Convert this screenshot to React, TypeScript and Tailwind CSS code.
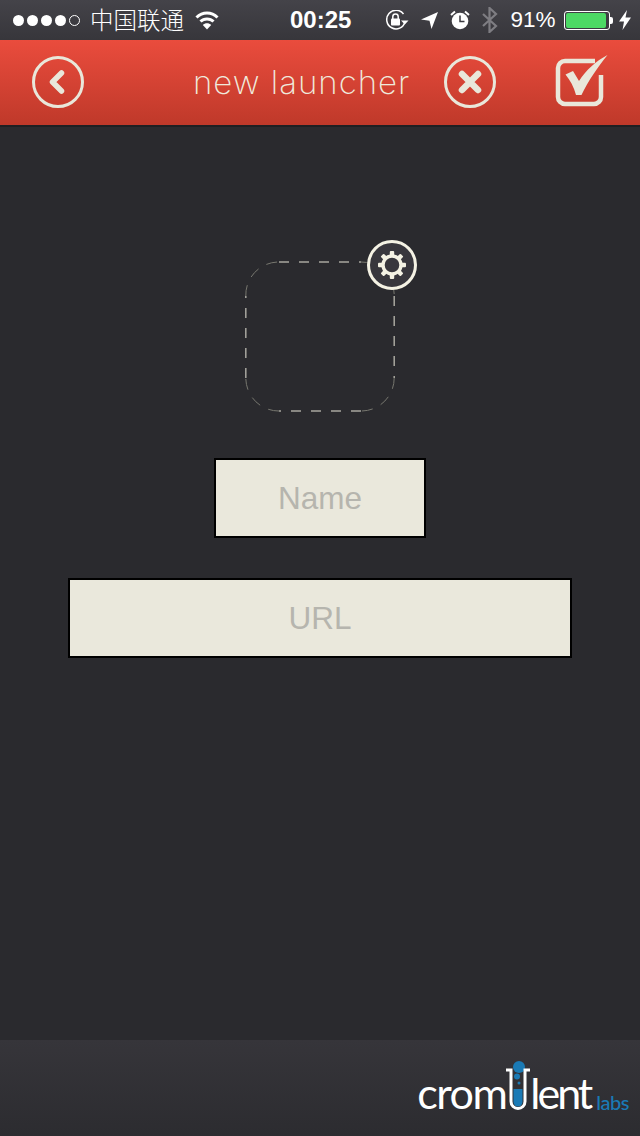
const cream = "#e9e7da";

function Dots() {
  return (
    <div className="flex gap-[3px]">
      <div className="w-[11px] h-[11px] rounded-full bg-white" />
      <div className="w-[11px] h-[11px] rounded-full bg-white" />
      <div className="w-[11px] h-[11px] rounded-full bg-white" />
      <div className="w-[11px] h-[11px] rounded-full bg-white" />
      <div className="w-[11px] h-[11px] rounded-full border border-white" />
    </div>
  );
}

function Wifi() {
  return (
    <svg width="24" height="20" viewBox="0 0 24 20" fill="none" stroke="#fff" strokeWidth="3">
      <path d="M1.5 7.5C7.5 1.5 16.5 1.5 22.5 7.5" />
      <path d="M5.5 11.5C9 8 15 8 18.5 11.5" />
      <path d="M12 19.5L7.8 15C10 12.8 14 12.8 16.2 15Z" fill="#fff" stroke="none" />
    </svg>
  );
}

function RotationLock() {
  return (
    <svg width="24" height="20" viewBox="0 0 24 20" fill="none">
      <path d="M20 12A9.3 9.3 0 1 1 18.5 4" stroke="#fff" strokeWidth="1.5" />
      <path d="M16 10.5H23.5L19.8 14.5Z" fill="#fff" />
      <rect x="6" y="8.5" width="9" height="7" rx="1" fill="#fff" />
      <path d="M7.8 9V6.8a2.7 2.7 0 0 1 5.4 0V9" stroke="#fff" strokeWidth="1.5" />
    </svg>
  );
}

function Location() {
  return (
    <svg width="17" height="17" viewBox="0 0 17 17">
      <path d="M17 0L10.5 17L8.5 8.7L0 7.5Z" fill="#fff" />
    </svg>
  );
}

function Alarm() {
  return (
    <svg width="20" height="20" viewBox="0 0 20 20" fill="none">
      <circle cx="10" cy="11" r="8.3" fill="#fff" />
      <path d="M10 5.5V11.5H14.5" stroke="#3a393f" strokeWidth="1.5" />
      <path d="M1 5L5 1.5M19 5L15 1.5" stroke="#fff" strokeWidth="2" />
    </svg>
  );
}

function Bluetooth() {
  return (
    <svg width="16" height="26" viewBox="0 0 16 26" fill="none" stroke="#7e7d82" strokeWidth="2.2">
      <path d="M1 7L14 19L7.5 25V1L14 7L1 19" />
    </svg>
  );
}

function Battery() {
  return (
    <div className="flex items-center">
      <div className="w-[46px] h-[19px] rounded-[3px] border border-white p-[1px]">
        <div className="w-[40px] h-full rounded-[2px] bg-[#4cd964]" />
      </div>
      <div className="w-[3px] h-[7px] rounded-r-[2px] bg-white" />
    </div>
  );
}

function Bolt() {
  return (
    <svg width="12" height="20" viewBox="0 0 12 20">
      <path d="M8 0L0 11.5H5L3.5 20L12 7.5H6.5Z" fill="#fff" />
    </svg>
  );
}

function BackIcon() {
  return (
    <svg width="52" height="52" viewBox="0 0 52 52" fill="none" stroke={cream}>
      <circle cx="26" cy="26" r="24.5" strokeWidth="3" />
      <path d="M29.5 17L20.5 26L29.5 35" strokeWidth="5.5" strokeLinecap="round" strokeLinejoin="round" />
    </svg>
  );
}

function CloseIcon() {
  return (
    <svg width="52" height="52" viewBox="0 0 52 52" fill="none" stroke={cream}>
      <circle cx="26" cy="26" r="24.5" strokeWidth="3" />
      <path d="M18 18L34 34M34 18L18 34" strokeWidth="6.5" strokeLinecap="round" />
    </svg>
  );
}

function CheckIcon() {
  return (
    <svg width="53" height="52" viewBox="0 0 53 52" fill="none">
      <path d="M40 6H10a7 7 0 0 0-7 7V42a7 7 0 0 0 7 7H39a7 7 0 0 0 7-7V20" stroke={cream} strokeWidth="4.5" />
      <path d="M10.5 19.5L18 16L24 26C31 15 41 6 52.5 0C43 12 33 26 26.5 40H21C19 32 15 25 10.5 19.5Z" fill={cream} />
    </svg>
  );
}

function Gear() {
  const teeth = [0, 45, 90, 135, 180, 225, 270, 315];
  return (
    <svg width="50" height="50" viewBox="0 0 50 50" fill="none">
      <circle cx="25" cy="25" r="23.5" fill="#38373d" stroke="#f4f2e4" strokeWidth="3" />
      <circle cx="25" cy="25" r="9" stroke="#f4f2e4" strokeWidth="3.4" />
      {teeth.map((a) => (
        <rect key={a} x="22.8" y="11" width="4.4" height="6" rx="1" fill="#f4f2e4" transform={`rotate(${a} 25 25)`} />
      ))}
    </svg>
  );
}

function DashedBox() {
  return (
    <svg width="150" height="151" viewBox="0 0 150 151" fill="none">
      <path
        d="M34 1H116M149.2 35V117M116 150H34M0.8 117V35"
        stroke="#a8a79f"
        strokeWidth="1.5"
        strokeDasharray="10 10"
      />
      <path
        d="M116 1A33 33 0 0 1 149.2 35M149.2 117A33 33 0 0 1 116 150M34 150A33 33 0 0 1 0.8 117M0.8 35A33 33 0 0 1 34 1"
        stroke="#77776f"
        strokeWidth="1"
        strokeDasharray="11 9"
      />
    </svg>
  );
}

function Tube() {
  return (
    <svg width="24" height="52" viewBox="0 0 24 52" fill="none">
      <circle cx="13" cy="6" r="6" fill="#1a7ab5" />
      <circle cx="11" cy="15.5" r="3" fill="#1a7ab5" />
      <circle cx="13" cy="22" r="1.5" fill="#1a7ab5" />
      <path d="M7.5 28H16.5V41a4.5 4.5 0 0 1-9 0Z" fill="#1a7ab5" />
      <path d="M0 9H5V40.5a7 7 0 0 0 14 0V9H24" stroke="#fff" strokeWidth="3" />
    </svg>
  );
}

export default function App() {
  return (
    <div className="w-[640px] h-[1136px] flex flex-col bg-[#2a2a2e] font-['Liberation_Sans',sans-serif] overflow-hidden">
      <div className="h-[40px] flex items-center pl-[13px] text-white bg-gradient-to-b from-[#444349] to-[#37363b]">
        <Dots />
        <span className="ml-[10px] w-[93px] text-[23.5px] font-['Noto_Sans_CJK_SC',sans-serif] font-light leading-none whitespace-nowrap">中国联通</span>
        <div className="ml-[12px]"><Wifi /></div>
        <span className="ml-[71px] text-[24px] font-bold leading-none">00:25</span>
        <div className="ml-[34px]"><RotationLock /></div>
        <div className="ml-[12px]"><Location /></div>
        <div className="ml-[12px]"><Alarm /></div>
        <div className="ml-[12px]"><Bluetooth /></div>
        <span className="ml-[12px] text-[22.5px] leading-none">91%</span>
        <div className="ml-[9px]"><Battery /></div>
        <div className="ml-[6px]"><Bolt /></div>
      </div>

      <div className="h-[87px] flex items-center pl-[32px] bg-gradient-to-b from-[#ea4c3d] to-[#bf392a] border-b-2 border-[#1f1f22] pb-[4px] pt-[2px]">
        <BackIcon />
        <span className="ml-[109px] w-[218px] pt-[2px] text-[33px] leading-none tracking-[1px] text-[#efe9dc] font-['Inter',sans-serif] font-extralight whitespace-nowrap">new launcher</span>
        <div className="ml-[33px]"><CloseIcon /></div>
        <div className="ml-[59px] -mt-[1px]"><CheckIcon /></div>
      </div>

      <div className="flex-1 flex flex-col items-center">
        <div className="relative mt-[134px] w-[150px] h-[151px]">
          <DashedBox />
          <div className="absolute -top-[21px] -right-[22px]"><Gear /></div>
        </div>
        <input
          placeholder="Name"
          className="mt-[46px] w-[212px] h-[80px] bg-[#eae8dc] border-2 border-black text-center text-[31.5px] pt-[1px] placeholder:text-[#b6b5ae] outline-none"
        />
        <input
          placeholder="URL"
          className="mt-[40px] w-[504px] h-[80px] bg-[#eae8dc] border-2 border-black text-center text-[31.5px] pt-[1px] placeholder:text-[#b6b5ae] outline-none"
        />
      </div>

      <div className="h-[96px] flex items-end justify-end pr-[11px] pb-[22px] bg-gradient-to-b from-[#36353a] to-[#2c2c30]">
        <div className="flex items-end font-['Lato',sans-serif] text-white text-[43px] leading-none tracking-[-1.5px]">
          <span>crom</span>
          <div className="mb-[1px]"><Tube /></div>
          <span className="tracking-[-3px]">lent</span>
          <span className="ml-[6px] mb-[2px] text-[20px] font-medium tracking-[-0.5px] text-[#1a7ab5]">labs</span>
        </div>
      </div>
    </div>
  );
}
